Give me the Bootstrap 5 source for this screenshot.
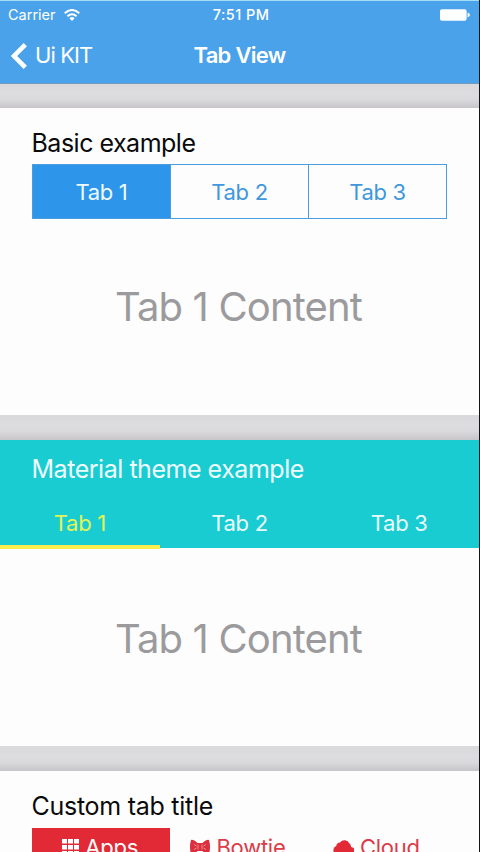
<!DOCTYPE html>
<html lang="en">
<head>
<meta charset="utf-8">
<meta name="viewport" content="width=device-width, initial-scale=1">
<title>Tab View</title>
<link rel="stylesheet" href="https://cdn.jsdelivr.net/npm/bootstrap@5.3.0/dist/css/bootstrap.min.css">
<style>
body{width:480px;height:852px;background:#fefdfe;font-family:Inter,"Liberation Sans",sans-serif;color:#111;border-right:1px solid #101518}
.app-header{height:84px;background:#49a2ea;border-top:1px solid #a5dcf5;border-bottom:1px solid #6f9cc0}
.status{height:27px;padding:0 9px 0 8px;font-size:14.5px;line-height:27px}
.status-side{flex:1 1 0}
.clock{letter-spacing:.45px;margin-left:4px}
.title-bar{height:55px;padding:0 10px}
.title-bar a,.title-bar h1{font-size:22px;line-height:55px}
.title-bar a{letter-spacing:-.9px}
.title-bar h1{font-weight:600;letter-spacing:-.7px}
.title-side{flex:1 1 0}
.gap-strip{height:25px;background:linear-gradient(#d9d8da,#dddcde 40%,#dad9db 65%,#c7c5c8)}
.gap-strip.first{height:24px}
.panel{height:307px}
.panel h2,.teal h2{font-size:25px;font-weight:400;line-height:30px;color:#0a0a0a}
.panel h2{letter-spacing:-.5px}
.panel.custom h2{letter-spacing:-.27px}
.basic-title{padding:20px 31.5px 0;height:56px}
.basic-tabs{margin-left:32px;width:415px;height:55px;border:1px solid #4c9ddd}
.tab-text{font-size:22px;border-radius:0!important;letter-spacing:-.3px}
.basic-tabs .nav-link{color:#3e98dd;height:53px;line-height:54px;padding:0}
.basic-tabs .nav-item+.nav-item{border-left:1px solid #4c9ddd}
.basic-tabs .nav-link.active{background:#2d96ea;color:#eefaff}
.big{font-size:40px;letter-spacing:-.85px;line-height:50px;color:#9b9b9d}
.big span{margin-right:2px}
.content-one{padding-bottom:20px}
.content-two{height:198px;padding-bottom:16px}
.teal{height:108px;background:#18ccd1}
.teal h2{padding:14px 31.5px 0;height:59px;color:#effcff;letter-spacing:-.47px}
.teal .nav-link{height:50px;line-height:49px;padding:0;color:#e9fbff}
.teal .nav-link.active{color:#e2f456;box-shadow:inset 0 -4px #fbee4e}
.panel.custom{height:81px}
.custom .basic-title{height:57px}
.red-tabs{margin-left:32px;width:415px}
.red-tabs .nav-link{height:38px;line-height:38px;padding:0;color:#dc3b48;letter-spacing:-.25px}
.red-tabs svg{margin-right:6px}
.red-tabs .nav-item:not(:first-child) .nav-link{padding-right:3px}
.red-tabs .nav-link.active{background:#e22a37;color:#fff;padding-right:2px}
</style>
<script src="https://cdn.jsdelivr.net/npm/bootstrap@5.3.0/dist/js/bootstrap.bundle.min.js"></script>
</head>
<body class="overflow-hidden">
<header class="app-header text-white">
  <div class="status d-flex align-items-center">
    <div class="status-side d-flex align-items-center"><span>Carrier</span>
      <svg class="ms-2" width="16" height="12" viewBox="0 0 16 12" fill="none" stroke="#fff" stroke-width="2"><path d="M.7 4.200Q8-2.200 15.300 4.200M3.400 7.200Q8 3.200 12.600 7.200"/><path d="M5.400 9.200Q8 7 10.600 9.200L8 12z" fill="#fff" stroke="none"/></svg>
    </div>
    <span class="fw-medium clock">7:51 PM</span>
    <div class="status-side d-flex justify-content-end"><svg width="30" height="12" viewBox="0 0 31 12" fill="#fff"><rect width="27.5" height="12" rx="2"/><path d="M28.500 3.500q2.500 1 2.500 2.500t-2.500 2.500z"/></svg></div>
  </div>
  <div class="title-bar d-flex align-items-center">
    <div class="title-side"><a href="#" class="d-flex align-items-center text-white text-decoration-none"><svg class="me-2" width="17" height="26" viewBox="0 0 17 26" fill="none" stroke="#fff" stroke-width="4.6"><path d="M15.300 1.600 4 13l11.300 11.400"/></svg>Ui KIT</a></div>
    <h1 class="m-0">Tab View</h1>
    <div class="title-side"></div>
  </div>
</header>
<main>
  <div class="gap-strip first"></div>
  <section class="panel d-flex flex-column">
    <div class="basic-title"><h2 class="m-0">Basic example</h2></div>
    <ul class="nav nav-justified basic-tabs flex-nowrap">
      <li class="nav-item"><a class="nav-link tab-text active" href="#">Tab 1</a></li>
      <li class="nav-item"><a class="nav-link tab-text" href="#">Tab 2</a></li>
      <li class="nav-item"><a class="nav-link tab-text" href="#">Tab 3</a></li>
    </ul>
    <div class="big content-one flex-grow-1 d-flex justify-content-center align-items-center"><span>Tab 1 Content</span></div>
  </section>
  <div class="gap-strip"></div>
  <section>
    <div class="teal">
      <h2 class="m-0">Material theme example</h2>
      <ul class="nav nav-justified flex-nowrap">
        <li class="nav-item"><a class="nav-link tab-text active" href="#">Tab 1</a></li>
        <li class="nav-item"><a class="nav-link tab-text" href="#">Tab 2</a></li>
        <li class="nav-item"><a class="nav-link tab-text" href="#">Tab 3</a></li>
      </ul>
    </div>
    <div class="big content-two d-flex justify-content-center align-items-center"><span>Tab 1 Content</span></div>
  </section>
  <div class="gap-strip"></div>
  <section class="panel custom">
    <div class="basic-title"><h2 class="m-0">Custom tab title</h2></div>
    <ul class="nav nav-justified red-tabs flex-nowrap">
      <li class="nav-item"><a class="nav-link tab-text active d-flex align-items-center justify-content-center" href="#"><svg width="17" height="17" viewBox="0 0 17 17" fill="#fff"><path d="M0 0h5v4.400H0zM6 0h5v4.400H6zM12 0h5v4.400h-5zM0 6h5v4.400H0zM6 6h5v4.400H6zM12 6h5v4.400h-5zM0 12h5v4.400H0zM6 12h5v4.400H6zM12 12h5v4.400h-5z"/></svg>Apps</a></li>
      <li class="nav-item"><a class="nav-link tab-text d-flex align-items-center justify-content-center" href="#"><svg width="20" height="17" viewBox="0 0 20 17"><path fill="#dc2f3d" d="M1 1Q3 0 7.500 4h5Q17 0 19 1q2 7 0 14-3 1-6.500-3h-5Q4 16 1 15-1 8 1 1z"/><path d="M4 5.500 6.500 7M16 5.500 13.500 7M4 10.500 6.500 9M16 10.500 13.500 9M8 5.500v5M12 5.500v5" stroke="#fff" stroke-width=".45"/></svg>Bowtie</a></li>
      <li class="nav-item"><a class="nav-link tab-text d-flex align-items-center justify-content-center" href="#"><svg width="21" height="15" viewBox="0 0 21 15"><path fill="#e22a37" d="M5 15a4.700 4.700 0 0 1-1.800-9A4.200 4.200 0 0 1 7 2.500a5.500 5.500 0 0 1 9.500 1A4 4 0 0 1 18 7a4 4 0 0 1-1 8z"/></svg>Cloud</a></li>
    </ul>
  </section>
</main>
</body>
</html>
